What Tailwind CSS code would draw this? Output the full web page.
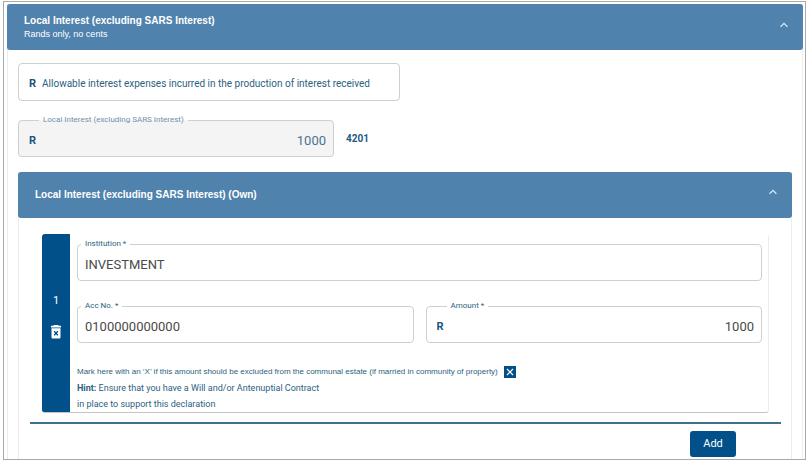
<!DOCTYPE html>
<html lang="en">
<head>
<meta charset="utf-8">
<meta name="viewport" content="width=device-width, initial-scale=1">
<title>Local Interest</title>
<script src="https://cdn.jsdelivr.net/npm/@tailwindcss/browser@4"></script>
</head>
<body class="bg-white pl-[3px] pr-1.5 pt-px font-['Roboto',sans-serif] text-[#2c5f80]">
<main class="border border-[#a9a9a9] pl-[3px] pr-0.5 pt-0.5">
  <section class="border-x border-[#ececec]">
    <button type="button" aria-expanded="true" class="-mx-px flex h-[46px] w-[calc(100%+2px)] items-center justify-between rounded-[3px] bg-[#4f82ad] pl-[17px] pr-[15px] text-left font-['Liberation_Sans',sans-serif] text-white">
      <span class="block">
        <span class="block text-[10px] leading-[14px] font-bold">Local Interest (excluding SARS Interest)</span>
        <span class="block text-[9px] leading-3">Rands only, no cents</span>
      </span>
      <svg class="mb-1 h-2 w-2" viewBox="0 0 8 8" fill="none" stroke="#d5e6f3" stroke-width="1.3" aria-hidden="true"><path d="M.6 5.8 4 2.4l3.4 3.4"/></svg>
    </button>

    <div class="px-2.5 pt-[13px]">
      <div class="flex h-[38px] w-full max-w-[382px] items-center gap-1.5 rounded border border-[#cfcfcf] px-2.5 pt-1">
        <span class="text-[11px] leading-4 font-bold text-[#175480]">R</span>
        <input type="text" aria-label="Allowable interest expenses incurred in the production of interest received" placeholder="Allowable interest expenses incurred in the production of interest received" class="min-w-0 flex-1 text-[10px] leading-4 outline-none placeholder:text-[#2c5f80]">
      </div>

      <div class="flex items-center gap-3 pt-3.5">
        <fieldset class="h-[42px] w-full max-w-[316px] rounded border border-[#cfcfcf] bg-[#f4f4f4] pr-[7px] pl-2.5">
          <legend class="ml-2.5 px-1 text-[8px] leading-[10px] text-[#7190aa]"><label for="total">Local Interest (excluding SARS Interest)</label></legend>
          <div class="flex h-8 items-center">
            <span class="text-[11px] leading-4 font-bold text-[#175480]">R</span>
            <input id="total" type="text" value="1000" readonly class="min-w-0 flex-1 text-right text-[13px] leading-4 text-[#4b7390] outline-none">
          </div>
        </fieldset>
        <span class="pt-1.5 text-[10px] leading-4 font-bold text-[#235b83]">4201</span>
      </div>

      <section class="mt-[15px] border-x border-[#ececec]">
        <button type="button" aria-expanded="true" class="-mx-px flex h-[46px] w-[calc(100%+2px)] items-center justify-between rounded-[3px] bg-[#4f82ad] pl-[17px] pr-[15px] text-left font-['Liberation_Sans',sans-serif] text-white">
          <span class="text-[10px] leading-[14px] font-bold">Local Interest (excluding SARS Interest) (Own)</span>
          <svg class="mb-1.5 h-2 w-2" viewBox="0 0 8 8" fill="none" stroke="#d5e6f3" stroke-width="1.3" aria-hidden="true"><path d="M.6 5.8 4 2.4l3.4 3.4"/></svg>
        </button>

        <div class="pt-4 pr-2.5 pl-[11px]">
          <div class="mx-3 flex overflow-hidden rounded-[3px] border-r border-b border-r-[#ececec] border-b-[#c4c4c4]">
            <div class="flex w-7 shrink-0 flex-col items-center justify-center gap-4 bg-[#02508a] pb-3.5 text-white">
              <span class="text-[11px] leading-4">1</span>
              <button type="button" aria-label="Delete entry 1" class="block">
                <svg class="h-3.5 w-3" viewBox="0 0 12 14" aria-hidden="true"><path fill="#fff" d="M4 0h4l.7.8H11v1.6H1V.8h2.300zM1.500 3.300h9v9a1.200 1.200 0 0 1-1.200 1.200H2.700a1.200 1.200 0 0 1-1.200-1.200z"/><path fill="none" stroke="#02508a" stroke-width="1.300" d="m4.200 6.300 3.600 3.900m0-3.900-3.600 3.900"/></svg>
              </button>
            </div>
            <div class="min-w-0 flex-1 pl-[7px] pr-1.5 pt-[5px]">
              <fieldset class="h-[42px] rounded border border-[#cfcfcf] px-[7px]">
                <legend class="-ml-1 px-1 text-[8px] leading-[10px]"><label for="institution">Institution *</label></legend>
                <div class="flex h-8 items-center">
                  <input id="institution" type="text" value="INVESTMENT" class="min-w-0 flex-1 text-[13px] leading-4 text-[#4a4a4a] outline-none">
                </div>
              </fieldset>
              <div class="mt-5 grid grid-cols-2 gap-3">
                <fieldset class="h-[42px] min-w-0 rounded border border-[#cfcfcf] px-[7px]">
                  <legend class="-ml-1 px-1 text-[8px] leading-[10px]"><label for="account">Acc No. *</label></legend>
                  <div class="flex h-8 items-center">
                    <input id="account" type="text" value="0100000000000" class="min-w-0 flex-1 text-[13px] leading-4 text-[#4a4a4a] outline-none">
                  </div>
                </fieldset>
                <fieldset class="h-[42px] min-w-0 rounded border border-[#cfcfcf] pl-2.5 pr-[7px]">
                  <legend class="ml-2.5 px-1 text-[8px] leading-[10px]"><label for="amount">Amount *</label></legend>
                  <div class="flex h-8 items-center">
                    <span class="text-[11px] leading-4 font-bold text-[#175480]">R</span>
                    <input id="amount" type="text" value="1000" class="min-w-0 flex-1 text-right text-[13px] leading-4 text-[#4a4a4a] outline-none">
                  </div>
                </fieldset>
              </div>
              <div class="mt-[21px] flex items-center gap-1.5 font-['Liberation_Sans',sans-serif]">
                <label for="exclude" class="text-[8px] leading-4">Mark here with an ‘X’ if this amount should be excluded from the communal estate (if married in community of property)</label>
                <span class="relative block h-3 w-3 shrink-0">
                  <input id="exclude" type="checkbox" checked class="peer block h-3 w-3 appearance-none border border-[#02508a] checked:bg-[#02508a]">
                  <svg class="pointer-events-none absolute inset-0 hidden h-3 w-3 peer-checked:block" viewBox="0 0 12 12" fill="none" stroke="#fff" stroke-width="1.200" aria-hidden="true"><path d="m3 3 6 6m0-6-6 6"/></svg>
                </span>
              </div>
              <p class="text-[9px] leading-4"><b>Hint:</b> Ensure that you have a Will and/or Antenuptial Contract<br>in place to support this declaration</p>
            </div>
          </div>
          <hr class="mt-[9px] border-t-2 border-[#3f7189]">
          <div class="flex justify-end pt-[7px] pr-[45px] pb-0.5">
            <button type="button" class="h-[26px] w-[46px] rounded-[3px] bg-[#02508a] text-[11px] leading-4 text-white">Add</button>
          </div>
        </div>
      </section>
    </div>
  </section>
</main>
</body>
</html>
